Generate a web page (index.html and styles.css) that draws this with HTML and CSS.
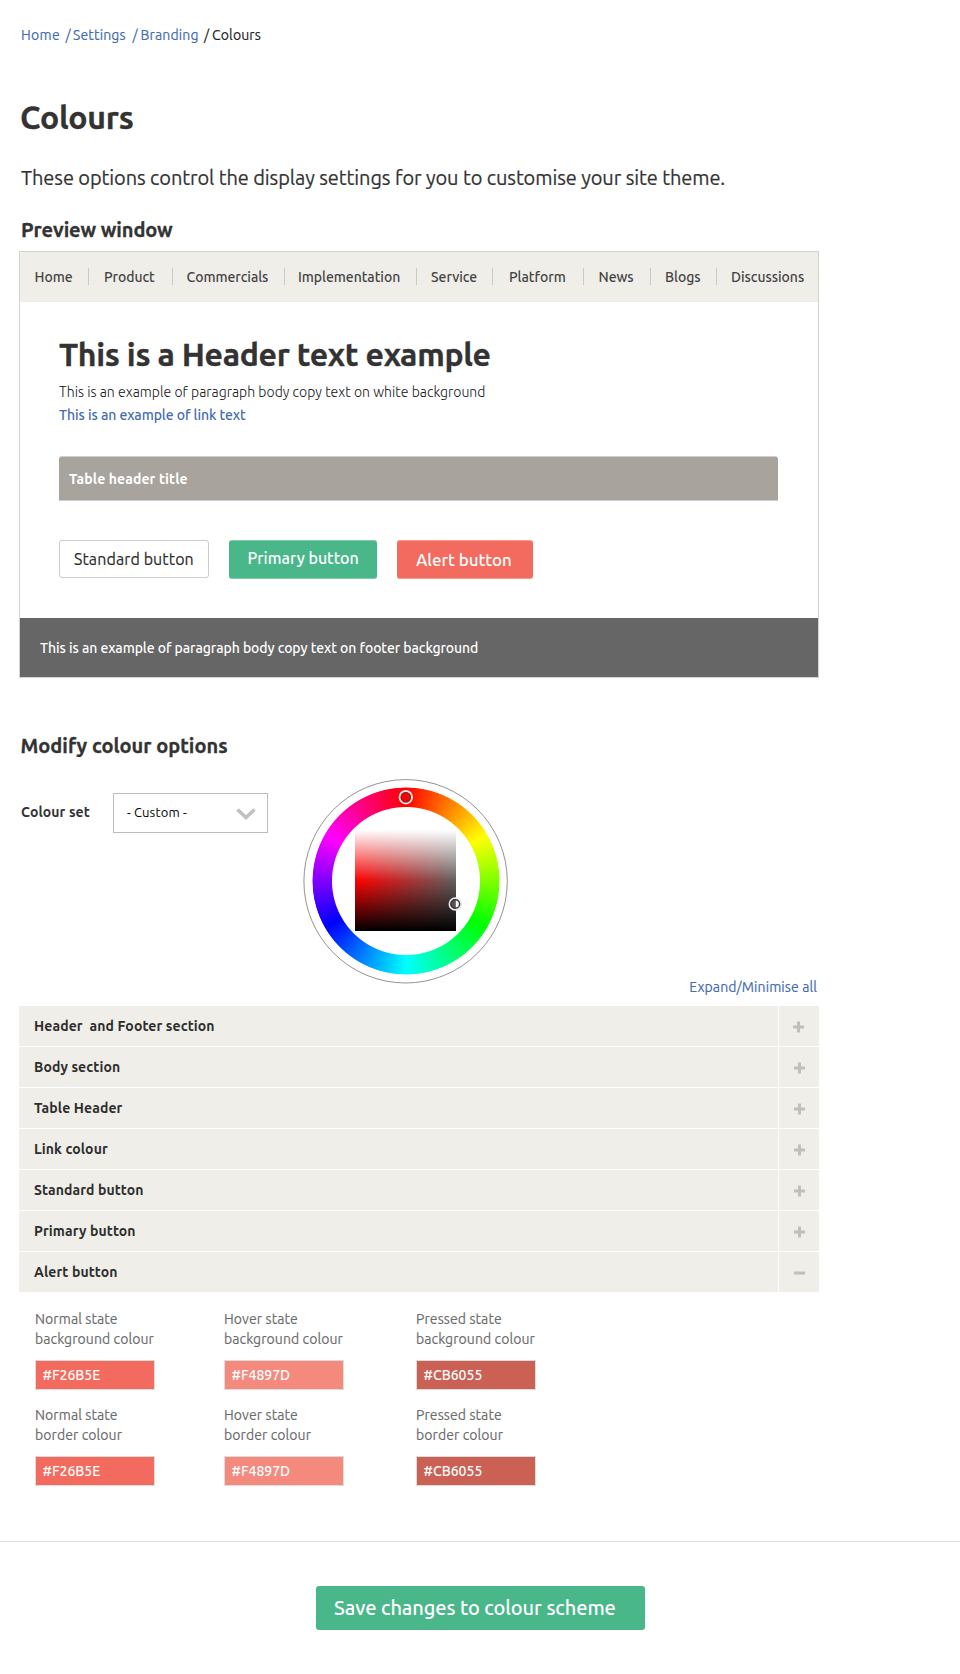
FILE: index.html
```
<!DOCTYPE html>
<html lang="en">
<head>
<meta charset="utf-8">
<title>Colours</title>
<link rel="stylesheet" href="styles.css">
</head>
<body>
<svg width="0" height="0" class="defs">
  <symbol id="plus" viewBox="0 0 11 12"><path d="M0 4.5h4V.5h3v4h4v3H7v4H4v-4H0z" fill="#bfbfbf"/></symbol>
  <symbol id="minus" viewBox="0 0 11 12"><path d="M0 4.5h11v3H0z" fill="#bfbfbf"/></symbol>
</svg>
<main class="page">
  <nav class="breadcrumb">
    <a class="crumb-home">Home</a><a>/</a><a>Settings</a><a>/</a><a>Branding</a><span>/</span><span>Colours</span>
  </nav>
  <h1 class="title">Colours</h1>
  <p class="intro">These options control the display settings for you to customise your site theme.</p>
  <h2 class="preview-title">Preview window</h2>

  <section class="preview">
    <nav class="preview-nav">
      <a>Home</a><a>Product</a><a>Commercials</a><a>Implementation</a><a>Service</a><a>Platform</a><a>News</a><a>Blogs</a><a>Discussions</a>
    </nav>
    <div class="preview-body">
      <h2 class="preview-header">This is a Header text example</h2>
      <p class="preview-copy">This is an example of paragraph body copy text on white background</p>
      <a class="preview-link">This is an example of link text</a>
      <div class="table-header">Table header title</div>
      <div class="buttons">
        <button class="btn btn-standard">Standard button</button>
        <button class="btn btn-primary">Primary button</button>
        <button class="btn btn-alert">Alert button</button>
      </div>
    </div>
    <footer class="preview-footer">This is an example of paragraph body copy text on footer background</footer>
  </section>

  <h2 class="modify-title">Modify colour options</h2>
  <div class="options">
    <label class="set-label">Colour set</label>
    <div class="select">
      <span>- Custom -</span>
      <svg class="chevron" width="20" height="12" viewBox="0 0 20 12"><path d="M1.5 1.5L10 9.500l8.500-8" fill="none" stroke="#bfc1c3" stroke-width="3.600"/></svg>
    </div>
    <div class="wheel">
      <div class="wheel-ring"></div>
      <div class="wheel-square"></div>
      <svg class="wheel-marks" width="206" height="206" viewBox="0 0 206 206">
        <circle cx="102.600" cy="103.300" r="101.700" fill="none" stroke="#777" stroke-width=".8"/>
        <circle cx="102.800" cy="19.200" r="6.200" fill="none" stroke="#f4e4e2" stroke-width="2"/>
        <circle cx="102.800" cy="19.200" r="4.500" fill="none" stroke="#8d2424" stroke-width="1.500"/>
        <path d="M152.500 122a4 4 0 0 1 0 8z" fill="#fff"/>
        <path d="M152.500 122a4 4 0 0 0 0 8z" fill="#555"/>
        <circle cx="152.300" cy="126" r="5.900" fill="none" stroke="#e8e8e8" stroke-width="1.800"/>
        <circle cx="152.300" cy="126" r="4.300" fill="none" stroke="#3c3c3c" stroke-width="1.500"/>
      </svg>
    </div>
    <a class="expand">Expand/Minimise all</a>
  </div>

  <section class="accordion">
    <div class="row"><h3>Header&nbsp; and Footer section</h3><span class="toggle toggle-first"><svg width="11" height="12"><use href="#plus"/></svg></span></div>
    <div class="row"><h3>Body section</h3><span class="toggle"><svg width="11" height="12"><use href="#plus"/></svg></span></div>
    <div class="row"><h3>Table Header</h3><span class="toggle"><svg width="11" height="12"><use href="#plus"/></svg></span></div>
    <div class="row"><h3>Link colour</h3><span class="toggle"><svg width="11" height="12"><use href="#plus"/></svg></span></div>
    <div class="row"><h3>Standard button</h3><span class="toggle"><svg width="11" height="12"><use href="#plus"/></svg></span></div>
    <div class="row"><h3>Primary button</h3><span class="toggle"><svg width="11" height="12"><use href="#plus"/></svg></span></div>
    <div class="row"><h3>Alert button</h3><span class="toggle"><svg width="11" height="12"><use href="#minus"/></svg></span></div>
  </section>

  <section class="swatches">
    <div><p>Normal state<br>background colour</p><div class="swatch normal">#F26B5E</div></div>
    <div><p>Hover state<br>background colour</p><div class="swatch hover">#F4897D</div></div>
    <div><p>Pressed state<br>background colour</p><div class="swatch pressed">#CB6055</div></div>
    <div><p>Normal state<br>border colour</p><div class="swatch normal">#F26B5E</div></div>
    <div><p>Hover state<br>border colour</p><div class="swatch hover">#F4897D</div></div>
    <div><p>Pressed state<br>border colour</p><div class="swatch pressed">#CB6055</div></div>
  </section>
</main>
<footer class="actions"><button class="save">Save changes to colour scheme</button></footer>
</body>
</html>
```
FILE: styles.css
```
* { box-sizing: border-box; }
body {
  margin: 0;
  background: #fff;
  color: #333;
  font: 14px/20px Ubuntu, "Noto Sans", sans-serif;
}
h1, h2, h3, p { margin: 0; }
h1, h2 { -webkit-text-stroke: 0.3px currentColor; }
button { font-family: inherit; border: 0; padding: 0; text-align: left; }
a { color: #426bb3; white-space: nowrap; }
.defs { position: absolute; }
.page { width: 819px; padding: 25px 0 0 19px; }

.breadcrumb {
  display: grid;
  grid-template-columns: 44.500px 7.500px 59.500px 8px 63.500px 8px auto;
  padding-left: 2px;
  letter-spacing: 0.15px;
  -webkit-text-stroke: 0.15px currentColor;
  white-space: nowrap;
}
.breadcrumb span { color: #222; }
.crumb-home { letter-spacing: 0.3px; }

.title { margin: 50px 0 0 1px; font-size: 32px; line-height: 44px; letter-spacing: -0.27px; }
.intro { margin: 25px 0 0 2px; font-size: 20px; line-height: 28px; letter-spacing: -0.09px; white-space: nowrap; -webkit-text-stroke: 0.2px currentColor; }
.preview-title { margin: 25px 0 0 2px; font-size: 20px; line-height: 26px; letter-spacing: -0.08px; }

.preview { margin-top: 8px; border: 1px solid #d3d3d0; }
.preview-nav {
  display: grid;
  grid-template-columns: 69px 84px 112px 132px 76px 91px 67px 66px 101px;
  height: 50px;
  padding-top: 16px;
  background: #efeee8;
}
.preview-nav a {
  height: 17px;
  padding-left: 14px;
  border-right: 1px solid #cbcac6;
  color: #444;
  font-weight: 500;
  line-height: 18px;
  letter-spacing: -0.04px;
}
.preview-nav a:last-child { border-right: 0; }
.preview-nav a:nth-child(1) { padding-left: 14.500px; }
.preview-nav a:nth-child(2) { padding-left: 15px; }
.preview-nav a:nth-child(3) { padding-left: 13.500px; }
.preview-nav a:nth-child(4) { padding-left: 13px; }
.preview-nav a:nth-child(6) { padding-left: 16px; }
.preview-nav a:nth-child(7) { padding-left: 14.500px; }

.preview-body { padding: 30px 40px 39px 39px; }
.preview-header { font-size: 32px; line-height: 44px; letter-spacing: -0.33px; white-space: nowrap; }
.preview-copy { margin-top: 5px; font-weight: 300; line-height: 23px; letter-spacing: 0.03px; color: #111; }
.preview-link { display: block; font-weight: 500; line-height: 23px; letter-spacing: -0.07px; }
.table-header {
  height: 45px;
  margin-top: 29px;
  padding: 12px 10px;
  border: solid #cfceca;
  border-width: 1px 0;
  border-radius: 3px 3px 0 0;
  background: #a8a39c;
  color: #fff;
  font-weight: 700;
  letter-spacing: 0.11px;
}
.buttons { display: flex; gap: 20px; margin-top: 39px; }
.btn { height: 39px; border-radius: 3px; font-size: 16px; line-height: 22px; color: #fff; white-space: nowrap; }
.btn-standard { width: 150px; height: 38px; padding: 0 0 0 14px; border: 1px solid #ccc; background: #fff; color: #2b2b2b; letter-spacing: 0.11px; -webkit-text-stroke: 0.15px currentColor; }
.btn-primary { width: 148px; padding: 0 0 3px 18.500px; background: #4ab78b; border: solid #80cbac; border-width: 1px 0; font-weight: 500; }
.btn-alert { width: 136px; padding: 0 0 0 19px; background: #f26b5e; border: solid #f59a91; border-width: 1px 0; font-size: 17px; font-weight: 500; letter-spacing: -0.1px; }
.preview-footer { height: 59px; padding: 20px; background: #666; color: #fff; font-weight: 500; letter-spacing: -0.07px; }

.modify-title { margin: 54px 0 0 1.500px; font-size: 20px; line-height: 28px; }
.options { display: flex; height: 219px; margin-top: 18px; padding-left: 2px; }
.set-label { width: 92px; margin-top: 24px; font-weight: 700; letter-spacing: 0.1px; }
.select {
  display: flex;
  justify-content: space-between;
  align-items: center;
  width: 155px;
  height: 40px;
  margin-top: 15px;
  padding: 0 11px 0 13px;
  border: 1px solid #bcbcbc;
  color: #000;
  font-size: 13px;
  letter-spacing: 0.15px;
}
.select span { padding-bottom: 2px; }
.chevron { margin-top: 2px; }
.wheel { display: grid; width: 206px; height: 206px; margin-left: 35px; place-items: center; }
.wheel > * { grid-area: 1 / 1; }
.wheel-ring {
  width: 188px;
  height: 188px;
  border-radius: 50%;
  background: conic-gradient(#f00, #ff0, #0f0, #0ff, #00f, #f0f, #f00);
  -webkit-mask: radial-gradient(circle, transparent 73.500px, #000 74.500px, #000 93px, transparent 94px);
  mask: radial-gradient(circle, transparent 73.500px, #000 74.500px, #000 93px, transparent 94px);
}
.wheel-square {
  width: 101px;
  height: 101px;
  margin: 0 2px 2px 0;
  background: linear-gradient(#fff, rgba(255, 255, 255, 0) 50%, rgba(0, 0, 0, 0) 50%, #000), linear-gradient(90deg, #f00, #606060);
}
.wheel-marks { z-index: 1; }
.expand { align-self: flex-end; margin: 0 2px 0 auto; letter-spacing: 0.1px; -webkit-text-stroke: 0.15px currentColor; }

.accordion { display: grid; gap: 1px; margin-top: 9px; }
.row { display: grid; grid-template-columns: 759px 40px; gap: 1px; height: 40px; }
.row h3 { padding: 10px 0 0 15px; background: #efeee8; color: #2d2d2d; font-size: 14px; line-height: 20px; letter-spacing: 0.11px; }
.toggle { display: flex; padding: 15px 0 0 15px; background: #efeee8; }
.toggle-first { padding-left: 14px; }

.swatches {
  display: grid;
  grid-template-columns: 189px 192px 120px;
  row-gap: 15px;
  margin: 17px 0 0 16px;
  color: #6c6c6c;
  letter-spacing: 0.09px;
}
.swatches p { -webkit-text-stroke: 0.15px currentColor; }
.swatch {
  width: 120px;
  height: 30px;
  margin-top: 11px;
  padding: 4px 6.500px;
  border: 1px solid #dcdcd9;
  color: #fff;
  font-weight: 500;
  letter-spacing: 0;
}
.normal { background: #f26b5e; }
.hover { background: #f4897d; }
.pressed { background: #cb6055; }

.actions { margin-top: 55px; padding: 44px 0 44px 316px; border-top: 1px solid #ddd; }
.save {
  display: block;
  width: 329px;
  height: 44px;
  padding: 0 0 1px 18px;
  border-radius: 3px;
  background: #4ab78b;
  color: #fff;
  font-size: 20px;
  font-weight: 500;
  line-height: 28px;
  letter-spacing: -0.08px;
  white-space: nowrap;
}
```
